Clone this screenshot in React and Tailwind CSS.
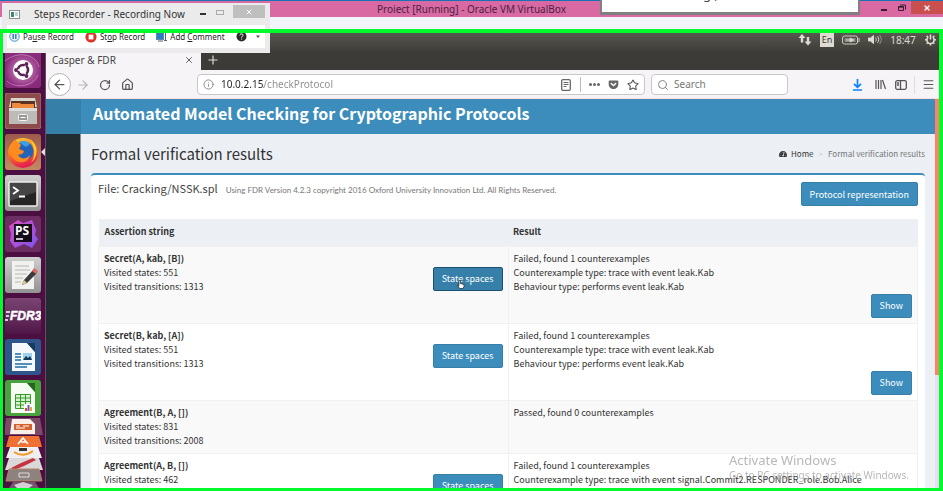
import React from 'react';
import { Search, Star, RotateCw, House, ArrowLeft, ArrowRight, Info, Menu, X, Plus } from 'lucide-react';
import { FaTachometerAlt, FaGetPocket } from 'react-icons/fa';

const assertions = [
  {
    name: 'Secret(A, kab, [B])',
    details: ['Visited states: 551', 'Visited transitions: 1313'],
    result: ['Failed, found 1 counterexamples', 'Counterexample type: trace with event leak.Kab', 'Behaviour type: performs event leak.Kab'],
    stateSpaces: true,
    show: true,
    active: true,
  },
  {
    name: 'Secret(B, kab, [A])',
    details: ['Visited states: 551', 'Visited transitions: 1313'],
    result: ['Failed, found 1 counterexamples', 'Counterexample type: trace with event leak.Kab', 'Behaviour type: performs event leak.Kab'],
    stateSpaces: true,
    show: true,
  },
  {
    name: 'Agreement(B, A, [])',
    details: ['Visited states: 831', 'Visited transitions: 2008'],
    result: ['Passed, found 0 counterexamples'],
  },
  {
    name: 'Agreement(A, B, [])',
    details: ['Visited states: 462'],
    result: ['Failed, found 1 counterexamples', 'Counterexample type: trace with event signal.Commit2.RESPONDER_role.Bob.Alice'],
    stateSpaces: true,
  },
];

function WindowTitle() {
  return (
    <header className="flex h-[17px] shrink-0 items-center border-t border-[#1672b4] bg-[#d969a3]">
      <div className="flex-1 text-center text-[10px] leading-4 text-[#4b2240]">Proiect [Running] - Oracle VM VirtualBox</div>
      <div className="absolute right-0 top-px flex h-[13px] items-center">
        <button aria-label="Minimize" className="flex h-full w-[18px] items-center justify-center">
          <span className="mt-1 h-0.5 w-1.5 bg-[#3b1c30]" />
        </button>
        <button aria-label="Restore" className="flex h-full w-[18px] items-center justify-center">
          <svg width="8" height="7" viewBox="0 0 8 7" fill="none" stroke="#3b1c30">
            <path d="M.5 2.5h5v4h-5zM2 1h5.5v4.5" />
            <path d="M.5 3.2h5" />
          </svg>
        </button>
        <button aria-label="Close" className="flex h-full w-8 items-center justify-center bg-[#c9504f] text-white">
          <X size={8} strokeWidth={4} />
        </button>
      </div>
    </header>
  );
}

function Recorder() {
  return (
    <section className="absolute left-[2px] top-[3px] z-10 flex h-[50px] w-[268px] flex-col whitespace-nowrap bg-[#ebebeb] px-[5px] pb-[5px]">
      <div className="flex h-[22px] shrink-0 items-center">
        <svg width="11" height="9" viewBox="0 0 11 9" className="ml-0.5">
          <rect x=".5" y=".5" width="10" height="8" fill="#fff" stroke="#8a9297" />
          <path d="M2 2h3v5H2z" fill="#3c8a68" />
          <path d="M6 3h3M6 5h3" stroke="#7aa" />
        </svg>
        <h2 className="ml-[14px] flex-1 text-[10px] text-[#333]">Steps Recorder - Recording Now</h2>
        <button aria-label="Minimize" className="flex h-3 w-4 items-center justify-center">
          <span className="h-0.5 w-1.5 bg-[#333]" />
        </button>
        <button aria-label="Maximize" className="mr-1 flex h-3 w-[18px] items-center justify-center">
          <span className="mb-1 h-[5px] w-2 border border-[#aaa]" />
        </button>
        <button aria-label="Close" className="mb-[5px] flex h-[13px] w-8 items-center justify-center bg-[#bfbfbf] text-white">
          <X size={8} strokeWidth={3} />
        </button>
      </div>
      <div className="flex flex-1 items-center bg-white pl-0.5 text-[8px] text-[#222]">
        <button className="flex items-center gap-[3px]">
          <svg width="11" height="11" viewBox="0 0 11 11">
            <circle cx="5.5" cy="5.5" r="4.8" fill="#e4f1fb" stroke="#4b94c8" />
            <path d="M4.2 3v5M6.8 3v5" stroke="#2a78b8" strokeWidth="1.4" />
          </svg>
          <span>Pa<u>u</u>se Record</span>
        </button>
        <button className="ml-[11px] flex items-center gap-[3px]">
          <svg width="12" height="12" viewBox="0 0 12 12">
            <circle cx="6" cy="6" r="5.6" fill="#d9352b" />
            <rect x="3.6" y="3.6" width="4.8" height="4.8" fill="#fff" />
          </svg>
          <span>St<u>o</u>p Record</span>
        </button>
        <button className="ml-[11px] flex items-center gap-[3px]">
          <svg width="11" height="10" viewBox="0 0 11 10">
            <rect x=".5" y=".5" width="7" height="7" fill="#2f7cc4" stroke="#5b89b5" />
            <path d="M9.5 1v7M8 8.5h3M2 9h5" stroke="#567" />
          </svg>
          <span>Add <u>C</u>omment</span>
        </button>
        <button aria-label="Help" className="ml-auto mr-[4px] flex items-center gap-2">
          <svg width="11" height="11" viewBox="0 0 11 11">
            <circle cx="5.5" cy="5.5" r="5" fill="#2b2b2b" />
            <path d="M3.8 4.3C4 2.2 7.4 2.4 7 4.4c-.2 1-1.4 1-1.4 2.2M5.6 7.6v1" stroke="#fff" fill="none" />
          </svg>
          <svg width="6" height="4" viewBox="0 0 6 4"><path d="M1 .5h4L3 3z" fill="#555" /></svg>
        </button>
      </div>
    </section>
  );
}

function Tray() {
  return (
    <div className="flex h-5 shrink-0 items-start justify-end gap-2 bg-linear-to-b from-[#57584f] to-[#3c3b37] pr-[2px] text-[#dfdbd2]">
      <svg width="14" height="13" viewBox="0 0 14 13" fill="#dfdbd2">
        <path d="M4 1 7.500 5H5.200v4.500H2.800V5H.5zM10 12.500 6.500 8.500h2.300V4h2.400v4.500h2.300z" />
      </svg>
      <span className="h-[14px] w-[14px] bg-[#dfdbd2] text-center text-[9px] leading-[14px] text-[#3c3b37]">En</span>
      <svg width="18" height="13" viewBox="0 0 18 13" fill="none" stroke="#cfccc4">
        <rect x=".5" y="3" width="15" height="8" rx="2" />
        <path d="M17 5v4" />
        <rect x="2.500" y="5" width="11" height="4" fill="#8a8982" stroke="none" />
        <path d="M4 7h4M8 5v4l4-2z" fill="#dfdbd2" />
      </svg>
      <svg width="14" height="13" viewBox="0 0 14 13" fill="none" stroke="#dfdbd2">
        <path d="M.5 5h2l3-2.500v8l-3-2.500h-2z" fill="#dfdbd2" />
        <path d="M7.500 4.500c1 1.300 1 2.700 0 4M9.500 3.200c1.700 2.200 1.700 4.400 0 6.600" />
        <path d="M11.500 2c2.300 3 2.300 6 0 9" opacity=".5" />
      </svg>
      <span className="w-[26px] text-center text-[10px] leading-[14px]">18:47</span>
      <svg width="13" height="13" viewBox="0 0 13 13" fill="none" stroke="#dfdbd2" strokeWidth="1.600">
        <path d="M4.300 4.200a3.600 3.600 0 1 0 4.400 0M6.500 1.500v5M6.500 10.500v2M1 6.800h2M10 6.800h2M2.600 2.900l1.400 1.400M10.400 2.900 9 4.300M2.600 10.700 4 9.300M10.400 10.700 9 9.300" />
      </svg>
    </div>
  );
}

function Tile({ label, children }) {
  return (
    <button aria-label={label} className="block h-9 w-9 shrink-0">
      <svg width="36" height="36" viewBox="0 0 36 36">{children}</svg>
    </button>
  );
}

function Launcher() {
  return (
    <nav className="relative flex w-[43px] shrink-0 flex-col gap-[5px] overflow-hidden border-r border-[#6d4767] bg-[#4b0f42] pl-[2px]">
      <svg width="0" height="0" className="absolute">
        <defs>
          <radialGradient id="dash"><stop offset="0" stopColor="#d79bc8" /><stop offset="1" stopColor="#8a2a7c" /></radialGradient>
          <linearGradient id="grey" x2="0" y2="1"><stop offset="0" stopColor="#cfcfcf" /><stop offset="1" stopColor="#929292" /></linearGradient>
          <linearGradient id="warm" x2="0" y2="1"><stop offset="0" stopColor="#9c5a4c" /><stop offset="1" stopColor="#c38a62" /></linearGradient>
          <linearGradient id="fox" x2=".3" y2="1"><stop offset="0" stopColor="#ffd83a" /><stop offset=".5" stopColor="#ff7a1e" /><stop offset="1" stopColor="#e5214f" /></linearGradient>
          <linearGradient id="storm" x2="1" y2="1"><stop offset="0" stopColor="#e04bc0" /><stop offset="1" stopColor="#7a55f0" /></linearGradient>
          <linearGradient id="plum" x2="0" y2="1"><stop offset="0" stopColor="#7a4573" /><stop offset="1" stopColor="#4f1747" /></linearGradient>
        </defs>
      </svg>
      <button aria-label="Search your computer" className="block h-[35px] w-9 shrink-0">
        <svg width="36" height="35" viewBox="0 0 36 35">
          <path d="M0 0h36v32a3 3 0 0 1-3 3H3a3 3 0 0 1-3-3z" fill="url(#dash)" />
          <path d="M0 8C12-2 30 0 34 14M2 28c8 8 26 6 31-6" stroke="#e3b4d8" opacity=".5" fill="none" />
          <circle cx="18" cy="17" r="10" fill="#fff" />
          <circle cx="18" cy="17" r="5" fill="none" stroke="#5d2355" strokeWidth="2.600" />
          <path d="M18 17 10 17M18 17l4.500-7.800M18 17l4.500 7.800" stroke="#fff" strokeWidth="1.300" />
          <circle cx="11" cy="17" r="1.900" fill="#5d2355" /><circle cx="21.500" cy="11" r="1.900" fill="#5d2355" /><circle cx="21.500" cy="23" r="1.900" fill="#5d2355" />
        </svg>
      </button>
      <Tile label="Files">
        <rect width="36" height="36" rx="3" fill="#8c4a4a" stroke="#a97070" />
        <path d="M6 5h24l2 9H4z" fill="#d9d4cc" />
        <path d="M6 8h24v8H6z" fill="#5b3424" />
        <path d="M7 10h8l1 1h13v6H7z" fill="#f08a3c" />
        <path d="M4 15h28v16H4z" fill="#bdbbb8" /><path d="M4 15h28v3H4z" fill="#dedcd9" />
        <rect x="13.500" y="21.500" width="9" height="6" rx="1" fill="#9a9896" stroke="#f3f3f3" /><path d="M15.500 24.500h5" stroke="#fff" />
      </Tile>
      <Tile label="Firefox">
        <rect width="36" height="36" rx="3" fill="url(#warm)" />
        <circle cx="18" cy="19" r="15" fill="url(#fox)" />
        <circle cx="19" cy="17" r="9.500" fill="#2464b8" />
        <path d="M14 8c4-2 9-1 11 2l-4 3-3-2z" fill="#3aa0e8" />
        <path d="M4 16C5 11 8 8 10 5c1 3 4 3 6 6l-2 4 5 2c-1 4-4 3-6 4 3 5 9 4 12 0-1 8-12 10-17 3C5 21 5 18 4 16z" fill="#ff8a1d" />
        <path d="M25 5c8 6 9 17 1 24 5-8 4-15-1-24z" fill="#ffd22e" />
      </Tile>
      <Tile label="Terminal">
        <rect width="36" height="36" rx="3" fill="url(#grey)" />
        <rect x="4" y="7" width="28" height="24" rx="1" fill="#252525" stroke="#efefef" strokeWidth="1.500" />
        <path d="M5 8h26v9L5 26z" fill="#454545" />
        <path d="m8 12 5 3.500-5 3.500M14 21.500h6" stroke="#fff" strokeWidth="1.800" fill="none" />
      </Tile>
      <Tile label="PhpStorm">
        <rect width="36" height="36" rx="3" fill="#6b2d62" />
        <path d="m4 10 9-6 5 3 9-3 4 10-1 5 3 4-6 9-8-4-9 4-5-7 1-7z" fill="url(#storm)" />
        <rect x="9" y="8" width="18" height="18" fill="#140c18" />
        <text x="10" y="19" fontSize="12" fontWeight="700" fontFamily="Open Sans, sans-serif" fill="#fff">PS</text>
        <path d="M11 23h7" stroke="#fff" strokeWidth="1.500" />
      </Tile>
      <Tile label="Text Editor">
        <rect width="36" height="36" rx="3" fill="url(#grey)" />
        <path d="M7 4h22v28H7z" fill="#f1f1ef" />
        <path d="M10 9h14M10 13h15M10 17h12M10 21h8M10 25h6" stroke="#b5b5b2" />
        <path d="m17 28 2-5 9-10 4 3-10 10z" fill="#3b3b3b" /><path d="m27 14 2-3 4 3-2 3z" fill="#d76a6a" /><path d="m17 28 2-5 3 3z" fill="#d9c98a" />
      </Tile>
      <Tile label="FDR3">
        <rect width="36" height="36" rx="3" fill="url(#plum)" />
        <text x="5" y="22" fontSize="12" fontStyle="italic" fontWeight="700" fontFamily="Liberation Sans, sans-serif" fill="#fff" stroke="#fff" strokeWidth=".5">FDR3</text>
        <path d="M1 14h4M1 18h3M0 22h3" stroke="#fff" strokeWidth="1.500" />
      </Tile>
      <Tile label="LibreOffice Writer">
        <rect width="36" height="36" rx="3" fill="#2f568a" />
        <path d="M7 4h15l8 9v19H7z" fill="#f6f9fb" /><path d="m22 4 8 9V4z" fill="#173a63" />
        <path d="M10 15h6M10 18h6M10 21h6M10 25h17M10 28h12" stroke="#1c6ea8" strokeWidth="1.700" />
        <rect x="18" y="14" width="9" height="7" fill="#9fd0ee" /><path d="m18 21 3-4 2 2 2-2 2 4z" fill="#123b57" />
      </Tile>
      <Tile label="LibreOffice Calc">
        <rect width="36" height="36" rx="3" fill="#48a33d" />
        <path d="M6 3h16l8 9v21H6z" fill="#f6fbf4" /><path d="m22 3 8 9V3z" fill="#23681c" />
        <path d="M10.500 14.500h15v14h-15zM10.500 18h15M10.500 21.500h15M10.500 25h15M15.500 14.500v14M20.500 14.500v14" fill="#d9f2d2" stroke="#379b2b" />
        <path d="M19 24h9v8h-9z" fill="#fff" /><path d="M21 31v-3" stroke="#e0452f" strokeWidth="2" /><path d="M23.500 31v-6" stroke="#5a5ec0" strokeWidth="2" /><path d="M26 31v-4" stroke="#f0a52a" strokeWidth="2" />
      </Tile>
      <svg width="38" height="70" viewBox="0 0 38 70" className="mt-[-3px] shrink-0">
        <path d="M1 0h34l3 17H-1z" fill="#7b4a66" /><path d="M7 1h18l5 5v10H5z" fill="#f8efe9" /><path d="M9 6h18v6H9z" fill="#d4622c" /><path d="M11 8h4M18 8h6M11 10h9" stroke="#fff" />
        <path d="M4 18h30l3 11H1z" fill="#f07033" /><path d="m13 26 5-6 5 6M16 24h5" stroke="#fff" strokeWidth="1.500" fill="none" />
        <path d="M5 29h28l4 11H1z" fill="#efefef" /><path d="M9 34q9 6 19-1" stroke="#f19b28" strokeWidth="2" fill="none" /><path d="M14 30h8v3h-8z" fill="#333" />
        <path d="M4 40h30l4 12H0z" fill="#d9d9da" /><path d="m6 50 10-5 12-5 3 2-12 6-10 4z" fill="#c63440" />
        <path d="M4 51h30l3 12H1z" fill="#8d827e" stroke="#b38168" /><path d="M14 55h10v4H14z" fill="none" stroke="#ddd" />
        <path d="M8 64h22l4 6H4z" fill="#72546e" /><path d="m9 67 9-3 10 3-4 3H12z" fill="#d5d0d6" />
      </svg>
      <svg width="4" height="8" viewBox="0 0 4 8" className="absolute right-0 top-[95px]"><path d="M4 0v8L0 4z" fill="#e6dbe4" /></svg>
    </nav>
  );
}

function Toolbar() {
  return (
    <div className="flex h-[29px] shrink-0 items-center border-b border-[#f9dedc] bg-[#f6f4f6] pl-[2px] pr-[4px] pt-px text-[#555]">
      <button aria-label="Back" className="flex h-[23px] w-[23px] shrink-0 items-center justify-center rounded-full border border-[#b5b5b5] bg-white">
        <ArrowLeft size={15} />
      </button>
      <button aria-label="Forward" className="ml-[5px] text-[#b5b5b5]"><ArrowRight size={14} /></button>
      <button aria-label="Reload" className="ml-[9px]"><RotateCw size={12} strokeWidth={2.5} /></button>
      <button aria-label="Home" className="ml-[10px]"><House size={13} strokeWidth={2.2} /></button>
      <div className="ml-[63px] flex h-[21px] min-w-0 flex-1 items-center rounded-sm border border-[#c8c8c8] bg-white px-[5px]">
        <Info size={11} className="shrink-0 text-[#888]" />
        <input
          aria-label="Address"
          defaultValue="10.0.2.15/checkProtocol"
          className="ml-[7px] min-w-0 flex-1 bg-[linear-gradient(to_right,#222_43px,#8b8b8b_43px)] bg-clip-text text-[10px] text-transparent outline-none"
        />
        <svg width="10" height="12" viewBox="0 0 10 12" fill="none" stroke="#666">
          <rect x=".7" y=".7" width="8.600" height="10.600" rx="1.200" strokeWidth="1.300" />
          <path d="M2.500 3.500h5M2.500 5.500h5M2.500 7.500h3" />
        </svg>
        <span className="ml-[9px] h-[15px] w-px bg-[#bbb]" />
        <button aria-label="Page actions" className="ml-2 flex gap-px">
          <i className="h-[3px] w-[3px] rounded-full bg-[#666]" /><i className="h-[3px] w-[3px] rounded-full bg-[#666]" /><i className="h-[3px] w-[3px] rounded-full bg-[#666]" />
        </button>
        <FaGetPocket size={11} className="ml-[8px] shrink-0 text-[#666]" />
        <Star size={12} strokeWidth={2.2} className="ml-2 shrink-0" />
      </div>
      <label className="ml-[6px] flex h-[21px] w-[137px] shrink-0 items-center gap-[5px] rounded-sm border border-[#c8c8c8] bg-white pl-[5px]">
        <Search size={12} className="text-[#888]" />
        <input aria-label="Search" placeholder="Search" className="w-24 text-[10px] outline-none placeholder:text-[#777]" />
      </label>
      <button aria-label="Downloads" className="ml-[64px]">
        <svg width="11" height="12" viewBox="0 0 11 12" fill="none" stroke="#0a84ff" strokeWidth="1.700"><path d="M5.500 0v8M2 4.800l3.500 3.500L9 4.800M1 11h9" /></svg>
      </button>
      <button aria-label="Library" className="ml-3">
        <svg width="11" height="11" viewBox="0 0 11 11" fill="none" stroke="#555" strokeWidth="1.200"><path d="M1 1v9M3.500 1v9M6 1v9M7.500 1l3 9" /></svg>
      </button>
      <button aria-label="Sidebar" className="ml-[9px]">
        <svg width="12" height="10" viewBox="0 0 12 10" fill="none" stroke="#555" strokeWidth="1.300"><rect x=".7" y=".7" width="10.600" height="8.600" rx="1.500" /><path d="M5.500 1v8M2 3h2M2 5h2" /></svg>
      </button>
      <span className="ml-[7px] h-[18px] w-px bg-[#ddd]" />
      <button aria-label="Menu" className="ml-[7px]"><Menu size={13} /></button>
    </div>
  );
}

function PrimaryButton({ children, active }) {
  return (
    <button
      className={
        active
          ? 'h-6 shrink-0 rounded-[2px] border border-[#1c4f70] bg-[#367fa9] px-2 text-[9px] leading-none text-white'
          : 'h-6 shrink-0 rounded-[2px] border border-[#367fa9] bg-[#3c8dbc] px-2 text-[9px] leading-none text-white'
      }
    >
      {children}
    </button>
  );
}

function ResultsTable() {
  return (
    <table className="mt-[13px] w-full table-fixed border-collapse text-left text-[9px] leading-[14px] text-[#333]">
      <thead>
        <tr className="h-[27px] bg-[#ecf0f4]">
          <th className="px-[6px] font-bold">Assertion string</th>
          <th className="px-[5px] font-bold">Result</th>
        </tr>
      </thead>
      <tbody>
        {assertions.map((row) => (
          <tr key={row.name} className="border border-[#f1f1f1] align-top odd:bg-[#f9f9f9]">
            <td className="border-r border-[#f1f1f1] px-[5px] py-[5px]">
              <div className="flex items-start justify-between">
                <div>
                  <div className="font-bold">{row.name}</div>
                  {row.details.map((line) => <div key={line}>{line}</div>)}
                </div>
                {row.stateSpaces && (
                  <div className="relative pt-[15px]">
                    <PrimaryButton active={row.active}>State spaces</PrimaryButton>
                    {row.active && (
                      <svg width="8" height="9" viewBox="0 0 8 9" className="absolute left-6 top-[28px]">
                        <path d="M2 .5h1.500v3L7 4.500v2L6 8.500H2.500L.5 5 2 5.500z" fill="#fff" stroke="#222" strokeWidth=".7" />
                      </svg>
                    )}
                  </div>
                )}
              </div>
            </td>
            <td className="px-[5px] py-[5px]">
              {row.result.map((line) => <div key={line}>{line}</div>)}
              {row.show && <div className="flex justify-end"><PrimaryButton>Show</PrimaryButton></div>}
            </td>
          </tr>
        ))}
      </tbody>
    </table>
  );
}

function Page() {
  return (
    <div className="flex min-h-0 flex-1 font-['Noto_Sans_CJK_SC',sans-serif]">
      <div className="flex w-[35px] shrink-0 flex-col border-r border-[#8a8f94] bg-[#222d32]">
        <div className="h-[35px] w-[35px] bg-[#367fa9]" />
      </div>
      <main className="flex min-w-0 flex-1 flex-col overflow-hidden bg-[#ecf0f5]">
        <header className="h-[35px] shrink-0 bg-[#3c8dbc] pl-3">
          <h1 className="text-[16px] font-bold leading-7 text-white">Automated Model Checking for Cryptographic Protocols</h1>
        </header>
        <div className="flex h-[39px] shrink-0 items-center justify-between px-[10px] pt-px">
          <h2 className="text-[15px] text-[#333]">Formal verification results</h2>
          <nav className="flex items-center text-[8px] text-[#777]">
            <FaTachometerAlt size={8} className="mr-1 text-[#333]" />
            <a href="#home" className="text-[#333]">Home</a>
            <span className="mx-[5px] text-[#ccc]">&gt;</span>
            <span>Formal verification results</span>
          </nav>
        </div>
        <section className="mx-[10px] flex-1 rounded-t-sm border-t-2 border-[#3c8dbc] bg-white px-[7px] pt-[7px]">
          <div className="flex items-start justify-between">
            <h3 className="flex items-baseline gap-2 text-[11px] leading-3 text-[#444]">
              File: Cracking/NSSK.spl
              <small className="font-['Lato',sans-serif] text-[8px] text-[#777]">Using FDR Version 4.2.3 copyright 2016 Oxford University Innovation Ltd. All Rights Reserved.</small>
            </h3>
            <PrimaryButton>Protocol representation</PrimaryButton>
          </div>
          <ResultsTable />
        </section>
      </main>
      <div className="w-1 shrink-0 bg-[#eadfee]"><div className="h-[71%] bg-[#fb8366]" /></div>
    </div>
  );
}

export default function App() {
  return (
    <div className="relative flex h-screen w-full flex-col overflow-hidden bg-[#f1f5fa] font-['Noto_Sans',sans-serif]">
      <WindowTitle />
      <div className="h-4 shrink-0" />
      <div className="flex min-h-0 flex-1 flex-col pb-[3px] pl-[3px] pr-1">
        <Tray />
        <div className="flex min-h-0 flex-1">
          <Launcher />
          <div className="flex min-w-0 flex-1 flex-col">
            <div className="flex h-[17px] shrink-0 items-center bg-[#3c3b37]">
              <div className="flex h-full w-[155px] items-center justify-between bg-[#f6f4f6] pb-1 pl-[6px] pr-[7px] text-[10px] leading-none text-[#444]">
                Casper &amp; FDR
                <button aria-label="Close tab"><X size={10} /></button>
              </div>
              <button aria-label="New tab" className="mb-1 ml-[5px] text-[#ddd]"><Plus size={14} /></button>
            </div>
            <Toolbar />
            <Page />
          </div>
        </div>
      </div>
      <aside className="absolute left-[600px] top-0 z-10 h-[15px] w-[260px] overflow-hidden border-x-2 border-b-[3px] border-[#808080] bg-white">
        <p className="mt-[-14px] pl-[101px] text-[13px] leading-4 text-[#444]">g ,</p>
      </aside>
      <Recorder />
      <div className="pointer-events-none absolute right-9 bottom-2 z-10 w-[178px] whitespace-nowrap text-[#999] opacity-70">
        <div className="text-[13px] leading-4">Activate Windows</div>
        <div className="text-[10px] leading-[15px]">Go to PC settings to activate Windows.</div>
      </div>
      <div className="pointer-events-none absolute inset-x-0 top-[29px] bottom-0 z-20 border-4 border-b-[3px] border-l-[3px] border-[#05fa2d]" />
    </div>
  );
}
